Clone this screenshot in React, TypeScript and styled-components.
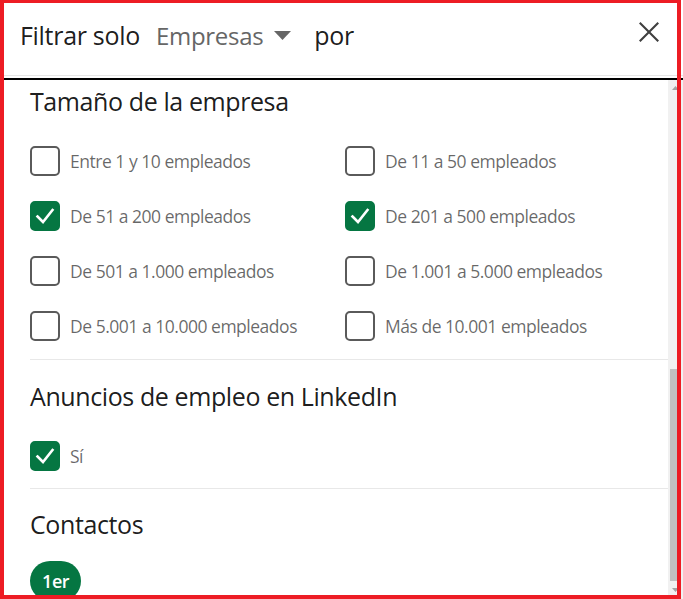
import React from "react";
import styled, { createGlobalStyle } from "styled-components";

const GlobalStyle = createGlobalStyle`
  html, body { margin: 0; padding: 0; background: #fff; }
  body { font-family: "Open Sans", "Noto Sans", "Liberation Sans", sans-serif; }
  #root { width: 683px; height: 599px; }
  * { box-sizing: border-box; }
`;

const GREEN = "#057642";

const Stage = styled.div`
  position: relative;
  width: 683px;
  height: 599px;
  overflow: hidden;
  background: #fff;
  display: flex;
  flex-direction: column;
`;

const Annotation = styled.div`
  position: absolute;
  left: 0;
  top: 0;
  width: 681px;
  height: 599px;
  border-style: solid;
  border-color: #ed1c24;
  border-width: 3px 4px 4px 4px;
  pointer-events: none;
`;

const Header = styled.header`
  flex: none;
  height: 76px;
  border-bottom: 1px solid #e6e6e6;
  display: flex;
  align-items: center;
  padding: 0 19px 5px 20px;
  color: rgba(0, 0, 0, 0.9);
  font-size: 24px;
  letter-spacing: -0.3px;
`;

const HeaderText = styled.span`
  white-space: nowrap;
  font-size: 25px;
`;

const TypeSelect = styled.button`
  display: flex;
  align-items: center;
  gap: 11px;
  margin: 0 23px 0 16px;
  padding: 0;
  border: 0;
  background: none;
  font: inherit;
  letter-spacing: inherit;
  color: #666;
`;

const CloseButton = styled.button`
  margin-left: auto;
  align-self: flex-start;
  margin-top: 17px;
  width: 30px;
  height: 30px;
  padding: 0;
  border: 0;
  background: none;
  color: #404040;
  display: flex;
`;

const Body = styled.div`
  flex: 1;
  min-height: 0;
  margin-top: 2px;
  border-top: 2px solid #000;
  display: flex;
`;

const ScrollArea = styled.div`
  flex: 1;
  min-width: 0;
  overflow: hidden;
  display: flex;
  flex-direction: column;
`;

const Section = styled.section<{ $top: number; $bottom: number; $divider?: boolean }>`
  flex: none;
  margin-left: 30px;
  padding: ${(p) => p.$top}px 0 ${(p) => p.$bottom}px 0;
  border-bottom: ${(p) => (p.$divider ? "1px solid #e8e8e8" : "none")};
`;

const Heading = styled.h3<{ $gap: number }>`
  margin: 0 0 ${(p) => p.$gap}px 0;
  font-size: 25px;
  line-height: 31px;
  font-weight: 400;
  letter-spacing: -0.4px;
  color: rgba(0, 0, 0, 0.9);
`;

const OptionGrid = styled.div`
  display: grid;
  grid-template-columns: 315px 1fr;
  row-gap: 25px;
`;

const Option = styled.label`
  display: flex;
  align-items: center;
  gap: 10px;
  height: 30px;
  font-size: 17.5px;
  letter-spacing: -0.48px;
  color: rgba(0, 0, 0, 0.6);
  white-space: nowrap;
`;

const Box = styled.span<{ $checked: boolean }>`
  flex: none;
  width: 30px;
  height: 30px;
  border-radius: 5px;
  border: 2px solid ${(p) => (p.$checked ? GREEN : "#5a5a5a")};
  background: ${(p) => (p.$checked ? GREEN : "#fff")};
  display: flex;
  align-items: center;
  justify-content: center;
`;

const Pill = styled.button`
  margin-top: 21px;
  height: 40px;
  padding: 0 12px;
  border: 0;
  border-radius: 20px;
  background: ${GREEN};
  color: #fff;
  font-family: inherit;
  font-size: 18px;
  font-weight: 600;
  letter-spacing: -0.4px;
`;

const Scrollbar = styled.div`
  flex: none;
  width: 15px;
  background: #f1f1f1;
  display: flex;
  flex-direction: column;
`;

const ScrollButton = styled.div<{ $h: number }>`
  flex: none;
  height: ${(p) => p.$h}px;
  display: flex;
  align-items: center;
  justify-content: center;
  color: #a3a3a3;
`;

const Track = styled.div`
  flex: 1;
  display: flex;
  flex-direction: column;
  justify-content: flex-end;
  padding: 0 2px;
`;

const Thumb = styled.div`
  height: 212px;
  background: #c1c1c1;
`;

const Check = () => (
  <svg width="24" height="24" viewBox="0 0 24 24" fill="none">
    <path d="M4.5 12.5 L10 18 L19.5 6" stroke="#fff" strokeWidth="2.6" strokeLinecap="square" />
  </svg>
);

const CheckOption = ({ label, checked }: { label: string; checked?: boolean }) => (
  <Option>
    <Box $checked={!!checked}>{checked && <Check />}</Box>
    {label}
  </Option>
);

const sizes: [string, boolean][] = [
  ["Entre 1 y 10 empleados", false],
  ["De 11 a 50 empleados", false],
  ["De 51 a 200 empleados", true],
  ["De 201 a 500 empleados", true],
  ["De 501 a 1.000 empleados", false],
  ["De 1.001 a 5.000 empleados", false],
  ["De 5.001 a 10.000 empleados", false],
  ["Más de 10.001 empleados", false],
];

export default function App() {
  return (
    <>
      <GlobalStyle />
      <Stage>
        <Header>
          <HeaderText>Filtrar solo</HeaderText>
          <TypeSelect>
            Empresas
            <svg width="17" height="9" viewBox="0 0 17 9">
              <path d="M0 0 H17 L8.5 9 Z" fill="#666" />
            </svg>
          </TypeSelect>
          <HeaderText>por</HeaderText>
          <CloseButton aria-label="Cerrar">
            <svg width="30" height="30" viewBox="0 0 24 24">
              <path
                fill="currentColor"
                d="M13.2 12L20 18.8 18.8 20 12 13.2 5.2 20 4 18.8 10.8 12 4 5.2 5.2 4 12 10.8 18.8 4 20 5.2z"
              />
            </svg>
          </CloseButton>
        </Header>
        <Body>
          <ScrollArea>
            <Section $top={6} $bottom={18} $divider>
              <Heading $gap={29}>Tamaño de la empresa</Heading>
              <OptionGrid>
                {sizes.map(([l, c]) => (
                  <CheckOption key={l} label={l} checked={c} />
                ))}
              </OptionGrid>
            </Section>
            <Section $top={21} $bottom={17} $divider>
              <Heading $gap={29}>Anuncios de empleo en LinkedIn</Heading>
              <CheckOption label="Sí" checked />
            </Section>
            <Section $top={20} $bottom={0}>
              <Heading $gap={0}>Contactos</Heading>
              <Pill>1er</Pill>
            </Section>
          </ScrollArea>
          <Scrollbar>
            <ScrollButton $h={15}>
              <svg width="7" height="4" viewBox="0 0 7 4">
                <path d="M0 4 L3.5 0 L7 4 Z" fill="currentColor" />
              </svg>
            </ScrollButton>
            <Track>
              <Thumb />
            </Track>
            <ScrollButton $h={18}>
              <svg width="7" height="4" viewBox="0 0 7 4">
                <path d="M0 0 L3.5 4 L7 0 Z" fill="currentColor" />
              </svg>
            </ScrollButton>
          </Scrollbar>
        </Body>
        <Annotation />
      </Stage>
    </>
  );
}
